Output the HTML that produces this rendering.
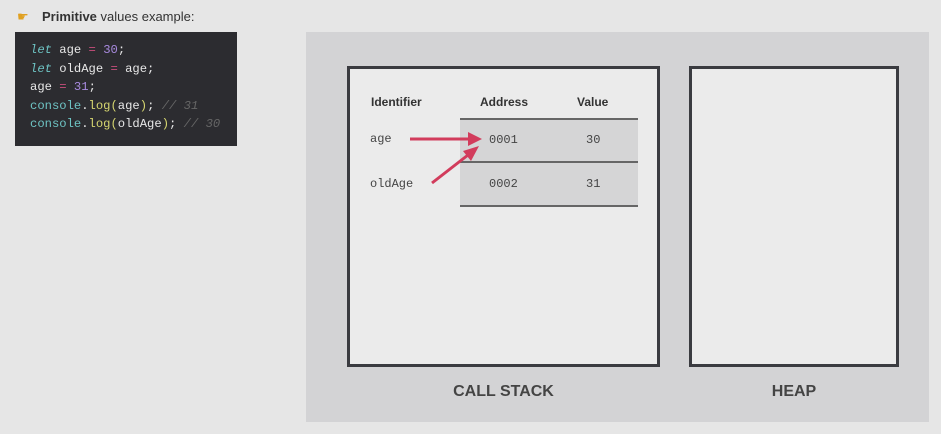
<!DOCTYPE html>
<html><head><style>
body{margin:0;width:941px;height:434px;background:#e6e6e6;position:relative;overflow:hidden;font-family:"Liberation Sans",sans-serif}
.a{position:absolute}
.code{left:15px;top:32px;width:222px;height:114px;background:#2c2c30;font-family:"Liberation Mono",monospace;font-size:12.2px;line-height:18.5px;color:#e8e8e8;padding:9px 0 0 15px;box-sizing:border-box;white-space:pre}
.k{color:#6ec4c4;font-style:italic}.p{color:#c94f7c}.n{color:#a98be0}.c{color:#6ec4c4}.y{color:#d6d670}.g{color:#666;font-style:italic}
.box{border:3px solid #3a3b40;background:#ebebeb;box-sizing:border-box}
.h{font-weight:bold;font-size:12px;color:#333}
.m{font-family:"Liberation Mono",monospace;font-size:12px;color:#444}
.lbl{font-weight:bold;font-size:16px;color:#444;text-align:center}
</style></head><body>
<div class="a" style="left:17px;top:9px;color:#e0a020;font-size:13px">☛</div>
<div class="a" style="left:42px;top:9px;font-size:13px;color:#333"><b>Primitive</b> values example:</div>
<div class="a code"><span class="k">let</span> age <span class="p">=</span> <span class="n">30</span>;
<span class="k">let</span> oldAge <span class="p">=</span> age;
age <span class="p">=</span> <span class="n">31</span>;
<span class="c">console</span>.<span class="y">log(</span>age<span class="y">)</span>; <span class="g">// 31</span>
<span class="c">console</span>.<span class="y">log(</span>oldAge<span class="y">)</span>; <span class="g">// 30</span></div>
<div class="a" style="left:306px;top:32px;width:623px;height:390px;background:#d3d3d5"></div>
<div class="a box" style="left:347px;top:66px;width:313px;height:301px"></div>
<div class="a box" style="left:689px;top:66px;width:210px;height:301px"></div>
<div class="a" style="left:460px;top:118px;width:178px;height:89px;background:#d5d5d6;border-top:2px solid #666;border-bottom:2px solid #666;box-sizing:border-box"></div>
<div class="a" style="left:460px;top:161px;width:178px;height:2px;background:#666"></div>
<div class="a h" style="left:371px;top:95px">Identifier</div>
<div class="a h" style="left:480px;top:95px">Address</div>
<div class="a h" style="left:577px;top:95px">Value</div>
<div class="a m" style="left:370px;top:132px">age</div>
<div class="a m" style="left:370px;top:177px">oldAge</div>
<div class="a m" style="left:489px;top:133px">0001</div>
<div class="a m" style="left:586px;top:133px">30</div>
<div class="a m" style="left:489px;top:177px">0002</div>
<div class="a m" style="left:586px;top:177px">31</div>
<svg class="a" style="left:0;top:0" width="941" height="434">
<g stroke="#d23c5c" stroke-width="3" fill="#d23c5c">
<line x1="410" y1="139" x2="470" y2="139"/>
<polygon points="482,139 468,132 468,146" stroke="none"/>
<line x1="432" y1="183" x2="468" y2="155"/>
<polygon points="479,146 463,151 471,161" stroke="none"/>
</g></svg>
<div class="a lbl" style="left:347px;top:383px;width:313px">CALL STACK</div>
<div class="a lbl" style="left:689px;top:383px;width:210px">HEAP</div>
</body></html>
